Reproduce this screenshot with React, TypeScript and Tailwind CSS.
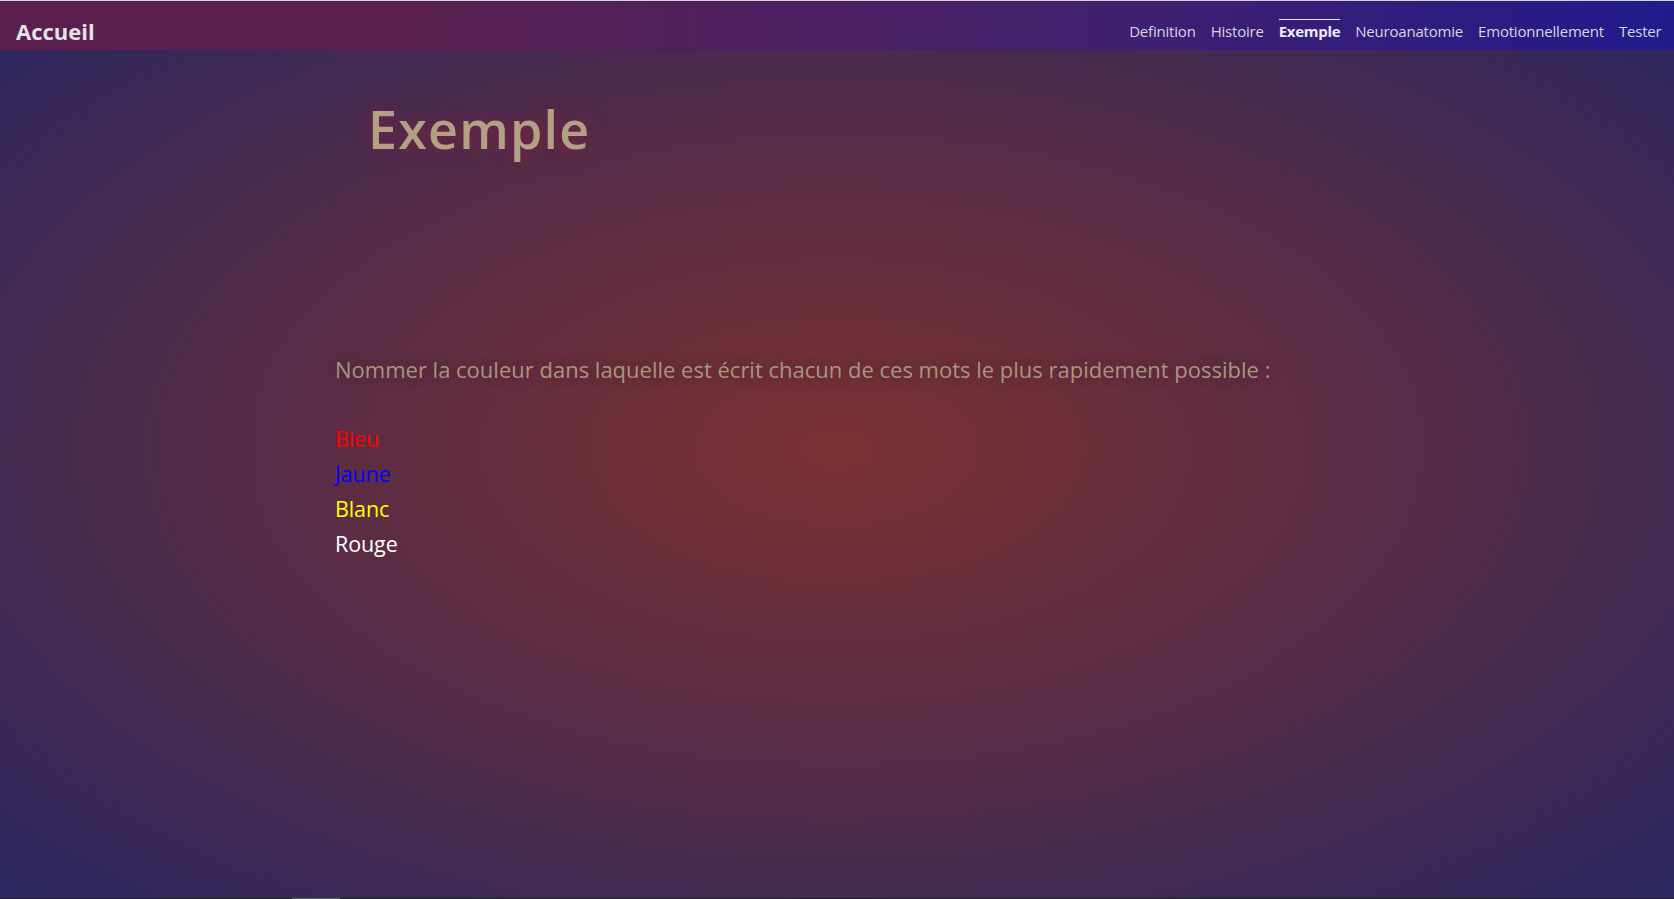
const links = ['Definition', 'Histoire', 'Exemple', 'Neuroanatomie', 'Emotionnellement', 'Tester'];

const words = [
  { text: 'Bleu', color: 'text-[#ff0000]' },
  { text: 'Jaune', color: 'text-[#0000ff]' },
  { text: 'Blanc', color: 'text-[#ffff00]' },
  { text: 'Rouge', color: 'text-white' },
];

export default function App() {
  return (
    <div
      className="h-[899px] w-full overflow-hidden flex flex-col bg-[radial-gradient(ellipse_at_center,#7a3233_0%,#5a2c45_45%,#2a2660_100%)] font-['Open_Sans',sans-serif]"
    >
      <div className="h-px bg-[#d4d4d8]" />
      <nav className="h-[49px] flex items-end justify-between pl-4 pr-[5px] pb-[9px] bg-[linear-gradient(to_right,#5a1f4e_22%,#45206b_62%,#221a8c)]">
        <a className="text-[22px] leading-[28px] font-bold text-[#e2e2e6] tracking-[0px] mb-[-4px]">Accueil</a>
        <ul className="flex items-end">
          {links.map((l) => (
            <li key={l} className="px-[7.5px]">
              <a
                className={
                  l === 'Exemple'
                    ? 'block pt-[1px] border-t border-[#e6e6ee] text-[15px] leading-[20px] font-bold text-[#ececf2] tracking-[-0.3px]'
                    : 'block pt-[1px] border-t border-transparent text-[15px] leading-[20px] text-[#d6d6e0] tracking-[-0.2px]'
                }
              >
                {l}
              </a>
            </li>
          ))}
        </ul>
      </nav>

      <main className="flex-1 pl-[335px]">
        <h1 className="mt-[53px] ml-[33px] text-[52px] font-semibold leading-none text-[#b3a084] tracking-[1.2px] [text-shadow:0_0_18px_rgba(170,30,50,0.55)]">
          Exemple
        </h1>
        <p className="mt-[198px] text-[22px] text-[#a8957f] [text-shadow:0_0_14px_rgba(60,20,40,0.4)]">
          Nommer la couleur dans laquelle est écrit chacun de ces mots le plus rapidement possible :
        </p>
        <ul className="mt-[35px] flex flex-col">
          {words.map((w) => (
            <li key={w.text} className={`text-[21.5px] leading-[35px] tracking-[-0.1px] ${w.color}`}>
              {w.text}
            </li>
          ))}
        </ul>
      </main>

      <div className="h-px bg-[#1f1f24] flex">
        <div className="ml-[292px] w-[48px] bg-[#5c5c64]" />
      </div>
    </div>
  );
}
